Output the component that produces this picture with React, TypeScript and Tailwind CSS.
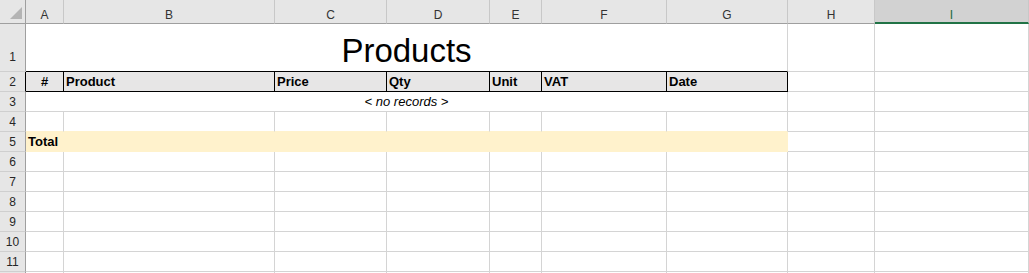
import React from "react";

const FONT = { fontFamily: '"Liberation Sans", Arial, sans-serif' };

const gridCell = "border-r border-b border-r-[#d4d4d4] border-b-[#d4d4d4] bg-white";
const rowHead =
  "bg-[#e6e6e6] border-r border-b border-r-[#9f9f9f] border-b-[#cfcfcf] text-[12px] leading-[20px] text-[#262626] flex justify-center items-start";
const colHead =
  "bg-[#e6e6e6] border-r border-b border-r-[#c8c8c8] border-b-[#9f9f9f] text-[12px] leading-[20px] pt-[5px] text-[#333] flex justify-center items-start";

function EmptyCols({ from, to, extra }: { from: number; to: number; extra?: string }) {
  const items = [];
  for (let i = from; i <= to; i++) {
    items.push(<div key={i} className={extra ? extra : gridCell} />);
  }
  return <>{items}</>;
}

export default function App() {
  const letters = ["A", "B", "C", "D", "E", "F", "G", "H"];
  const headers = ["#", "Product", "Price", "Qty", "Unit", "VAT", "Date"];
  const emptyRows = [6, 7, 8, 9, 10, 11];
  return (
    <div className="w-[1029px] h-[273px] overflow-hidden bg-white" style={FONT}>
      <div className="grid grid-cols-[26px_38px_211px_112px_103px_52px_125px_121px_87px_1fr] grid-rows-[24px_48px_repeat(11,20px)]">
        {/* column header row */}
        <div className="bg-[#e6e6e6] border-r border-b border-r-[#9f9f9f] border-b-[#9f9f9f] relative">
          <svg className="absolute left-0 top-0" width="25" height="23" viewBox="0 0 25 23">
            <polygon points="22,7 22,19 10,19" fill="#b4b4b4" />
          </svg>
        </div>
        {letters.map((l) => (
          <div key={l} className={colHead}>
            {l}
          </div>
        ))}
        <div className="bg-[#d2d2d2] border-r border-b-2 border-r-[#c8c8c8] border-b-[#217346] text-[12px] leading-[20px] pt-[5px] text-[#1d6b40] flex justify-center items-start">
          I
        </div>

        {/* row 1 */}
        <div className="bg-[#e6e6e6] border-r border-b border-r-[#9f9f9f] border-b-[#cfcfcf] text-[12px] leading-[20px] text-[#262626] flex justify-center items-end pb-[4px]">
          1
        </div>
        <div className="col-span-7 border-r border-b border-r-[#d4d4d4] border-b-black flex justify-center items-end pb-[1px] text-[33px] leading-[38px] text-black">
          Products
        </div>
        <EmptyCols from={8} to={9} />

        {/* row 2 */}
        <div className="bg-[#e6e6e6] border-r border-b border-r-black border-b-[#cfcfcf] text-[12px] leading-[20px] text-[#262626] flex justify-center items-start">
          2
        </div>
        {headers.map((h, i) => (
          <div
            key={h}
            className={
              i === 0
                ? "bg-[#e7e6e6] border-r border-b border-black text-[13px] font-bold leading-[19px] text-black flex justify-center"
                : "bg-[#e7e6e6] border-r border-b border-black text-[13px] font-bold leading-[19px] text-black pl-[2px] whitespace-nowrap overflow-hidden"
            }
          >
            {h}
          </div>
        ))}
        <EmptyCols from={8} to={9} />

        {/* row 3 */}
        <div className={rowHead}>3</div>
        <div className="col-span-7 border-r border-b border-r-[#d4d4d4] border-b-[#d4d4d4] flex justify-center text-[13px] italic leading-[19px] text-black">
          &lt; no records &gt;
        </div>
        <EmptyCols from={8} to={9} />

        {/* row 4 */}
        <div className={rowHead}>4</div>
        <EmptyCols
          from={1}
          to={7}
          extra="border-r border-b border-r-[#d4d4d4] border-b-[#fff2cc] bg-white"
        />
        <EmptyCols from={8} to={9} />

        {/* row 5 */}
        <div className={rowHead}>5</div>
        <div className="col-span-7 bg-[#fff2cc] border-r border-b border-r-[#fff2cc] border-b-[#fff2cc] pl-[2px] text-[13px] font-bold leading-[19px] text-black">
          Total
        </div>
        <EmptyCols from={8} to={9} />

        {emptyRows.map((r) => (
          <React.Fragment key={r}>
            <div className={rowHead}>{r}</div>
            <EmptyCols from={1} to={9} />
          </React.Fragment>
        ))}

        {/* row 12 (only its top pixel is visible) */}
        <div className={rowHead} />
        <EmptyCols from={1} to={9} />
      </div>
    </div>
  );
}
